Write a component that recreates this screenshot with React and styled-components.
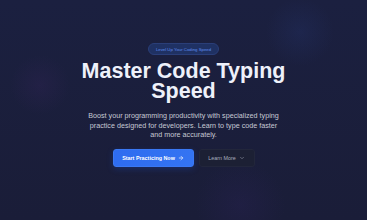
import React from 'react';
import styled, { createGlobalStyle } from 'styled-components';
import { ArrowRight, ChevronDown } from 'lucide-react';

const GlobalStyle = createGlobalStyle`
  html, body {
    margin: 0;
    padding: 0;
    background: #1b1f3b;
  }
  body {
    font-family: "Liberation Sans", Arial, sans-serif;
  }
`;

const Hero = styled.section`
  width: 367px;
  height: 220px;
  overflow: hidden;
  background:
    radial-gradient(circle at 40px 85px, rgba(70, 40, 110, 0.18) 0, rgba(70, 40, 110, 0) 30px),
    radial-gradient(circle at 300px 32px, rgba(45, 70, 150, 0.16) 0, rgba(45, 70, 150, 0) 34px),
    radial-gradient(circle at 240px 205px, rgba(60, 40, 120, 0.16) 0, rgba(60, 40, 120, 0) 45px),
    linear-gradient(180deg, #1b2040 0%, #1a1d38 100%);
  display: flex;
  flex-direction: column;
  align-items: center;
  padding-top: 43px;
  box-sizing: border-box;
`;

const Badge = styled.div`
  height: 12px;
  padding: 0 7px;
  border-radius: 6px;
  background: #1f3163;
  border: 1px solid #2a3e78;
  box-sizing: border-box;
  display: flex;
  align-items: center;
  color: #5f8ff0;
  font-size: 4.3px;
  font-weight: 500;
`;

const Title = styled.h1`
  margin: 6px 0 0;
  font-size: 21.5px;
  line-height: 20px;
  font-weight: 700;
  color: #eef1fa;
  text-align: center;
  width: 230px;
`;

const Lead = styled.p`
  margin: 10px 0 0;
  width: 200px;
  font-size: 7.2px;
  line-height: 9.5px;
  color: #c6c9d4;
  text-align: center;
`;

const Actions = styled.div`
  margin-top: 9px;
  display: flex;
  gap: 5px;
`;

const Button = styled.button`
  height: 18px;
  padding: 0;
  border-radius: 3px;
  display: flex;
  align-items: center;
  justify-content: center;
  gap: 3px;
  font-family: inherit;
  font-size: 5.4px;
  cursor: pointer;
  width: ${p => (p.$primary ? '81px' : '56px')};
  font-weight: ${p => (p.$primary ? 700 : 400)};
  color: ${p => (p.$primary ? '#ffffff' : '#a8adbd')};
  background: ${p => (p.$primary ? 'linear-gradient(90deg, #2e6cf0, #3474f2)' : '#1c2034')};
  border: 1px solid ${p => (p.$primary ? '#3a78f3' : '#22263b')};
  box-shadow: ${p => (p.$primary ? '0 2px 6px rgba(30, 80, 200, 0.3)' : 'none')};
`;

export default function App() {
  return (
    <>
      <GlobalStyle />
      <Hero>
        <Badge>Level Up Your Coding Speed</Badge>
        <Title>Master Code Typing Speed</Title>
        <Lead>
          Boost your programming productivity with specialized typing practice designed for
          developers. Learn to type code faster and more accurately.
        </Lead>
        <Actions>
          <Button $primary>
            Start Practicing Now <ArrowRight size={6} strokeWidth={2.5} />
          </Button>
          <Button>
            Learn More <ChevronDown size={6} strokeWidth={2} />
          </Button>
        </Actions>
      </Hero>
    </>
  );
}
